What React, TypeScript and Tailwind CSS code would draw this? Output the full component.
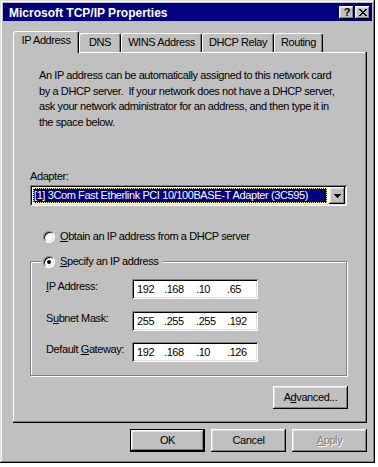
import type { ReactNode } from "react"

const raised = "bg-[#c0c0c0] shadow-[inset_-1px_-1px_#000,inset_1px_1px_#fff,inset_-2px_-2px_#808080,inset_2px_2px_#dfdfdf]"
const sunken = "bg-white shadow-[inset_1px_1px_#808080,inset_-1px_-1px_#fff,inset_2px_2px_#000,inset_-2px_-2px_#dfdfdf]"

const TABS = [
  { label: "IP Address", w: "w-[66px]", active: true },
  { label: "DNS", w: "w-[42px]" },
  { label: "WINS Address", w: "w-[81px]" },
  { label: "DHCP Relay", w: "w-[72px]" },
  { label: "Routing", w: "w-[49px]" },
]

function Radio({ checked }: { checked?: boolean }) {
  return (
    <span className="flex h-3 w-3 shrink-0 items-center justify-center rounded-full border border-t-[#808080] border-l-[#808080] border-b-white border-r-white bg-white shadow-[inset_1px_1px_#000,inset_-1px_-1px_#dfdfdf]">
      {checked && <span className="h-1 w-1 rounded-full bg-black" />}
    </span>
  )
}

function IpField({ parts }: { parts: string[] }) {
  return (
    <div className={`flex h-5 w-[126px] items-center pl-[5px] ${sunken}`}>
      <span className="w-[27px]">{parts[0]}</span>
      <span className="w-[32px]">.{parts[1]}</span>
      <span className="w-[31px]">.{parts[2]}</span>
      <span>.{parts[3]}</span>
    </div>
  )
}

function Row({ label, parts, className = "" }: { label: ReactNode; parts: string[]; className?: string }) {
  return (
    <div className={`flex h-5 items-start ${className}`}>
      <span className="w-[86px] pt-px">{label}</span>
      <IpField parts={parts} />
    </div>
  )
}

function Btn({ children, className = "" }: { children: ReactNode; className?: string }) {
  return <div className={`flex h-[23px] w-[75px] items-center justify-center ${raised} ${className}`}>{children}</div>
}

export default function App() {
  return (
    <div className="h-[467px] w-[378px] bg-white font-['Liberation_Sans',Arial,sans-serif] text-[11px] leading-[13px] tracking-[-0.4px] text-black">
      <div className="flex h-[463px] w-[375px] flex-col bg-[#c0c0c0] p-[3px] shadow-[inset_-1px_-1px_#000,inset_1px_1px_#dfdfdf,inset_-2px_-2px_#808080,inset_2px_2px_#fff]">
        {/* title bar */}
        <div className="flex h-[18px] shrink-0 items-center bg-[#000080] pl-[6px] pr-[2px]">
          <span className="flex-1 pt-px text-[12px] font-bold leading-[18px] tracking-normal text-white">Microsoft TCP/IP Properties</span>
          <div className={`flex h-[13px] w-[15px] items-center justify-center pl-px text-[11px] font-bold leading-none ${raised}`}>?</div>
          <div className={`ml-px flex h-[13px] w-[15px] items-center justify-center ${raised}`}>
            <svg width="8" height="7" viewBox="0 0 8 7" shapeRendering="crispEdges">
              <path d="M0 0h2v1H0zM6 0h2v1H6zM1 1h2v1H1zM5 1h2v1H5zM2 2h4v1H2zM3 3h2v1H3zM2 4h4v1H2zM1 5h2v1H1zM5 5h2v1H5zM0 6h2v1H0zM6 6h2v1H6z" fill="#000" />
            </svg>
          </div>
        </div>

        {/* tabs */}
        <div className="ml-[10px] mt-[10px] flex h-[21px] shrink-0 items-end">
          {TABS.map((t) => (
            <div
              key={t.label}
              className={`flex shrink-0 justify-center rounded-t-[3px] border-l border-t border-r border-white border-r-black bg-[#c0c0c0] pt-[2px] shadow-[inset_-1px_0_#808080] ${t.w} ${t.active ? "relative z-10 -mb-px h-[22px]" : "h-[19px]"}`}
            >
              {t.label}
            </div>
          ))}
        </div>

        {/* tab panel */}
        <div className="ml-[10px] flex h-[371px] w-[354px] shrink-0 flex-col shadow-[inset_-1px_-1px_#000,inset_-2px_-2px_#808080,inset_1px_1px_#fff]">
          <p className="ml-[26px] mt-[16px] h-[63px] whitespace-pre leading-[15.7px]">
            {"An IP address can be automatically assigned to this network card\nby a DHCP server.  If your network does not have a DHCP server,\nask your network administrator for an address, and then type it in\nthe space below."}
          </p>
          <div className="ml-[17px] mt-[39px]">Adapter:</div>
          <div className={`ml-[17px] mt-[2px] flex h-[21px] w-[317px] p-[2px] ${sunken}`}>
            <div className="my-px ml-px mr-[2px] flex flex-1 items-center border border-dotted border-[#ffff80] bg-[#000080] text-white whitespace-nowrap">
              [1] 3Com Fast Etherlink PCI 10/100BASE-T Adapter (3C595)
            </div>
            <div className={`flex w-4 items-center justify-center ${raised}`}>
              <svg width="7" height="4" viewBox="0 0 7 4" shapeRendering="crispEdges">
                <path d="M0 0h7v1H0zM1 1h5v1H1zM2 2h3v1H2zM3 3h1v1H3z" fill="#000" />
              </svg>
            </div>
          </div>

          <div className="ml-[30px] mt-[24px] flex h-[13px] items-center gap-[5px]">
            <Radio />
            <span><u>O</u>btain an IP address from a DHCP server</span>
          </div>

          <div className="ml-[17px] mt-[18px] flex w-[318px] flex-col">
            <div className="w-[317px] border border-[#808080] pb-[13px] shadow-[inset_1px_1px_#fff,1px_1px_#fff]">
              <div className="-mt-[7px] ml-[10px] flex h-[13px] w-fit items-center gap-[5px] bg-[#c0c0c0] pl-[2px] pr-[5px]">
                <Radio checked />
                <span><u>S</u>pecify an IP address</span>
              </div>
              <div className="mt-[11px] flex flex-col pl-[15px]">
                <Row label={<><u>I</u>P Address:</>} parts={["192", "168", "10", "65"]} />
                <Row className="mt-[12px]" label={<>S<u>u</u>bnet Mask:</>} parts={["255", "255", "255", "192"]} />
                <Row className="mt-[11px]" label={<>Default <u>G</u>ateway:</>} parts={["192", "168", "10", "126"]} />
              </div>
            </div>
            <Btn className="mt-[10px] self-end">A<u>d</u>vanced...</Btn>
          </div>
        </div>

        {/* dialog buttons */}
        <div className="ml-[10px] mt-[6px] flex w-[354px] justify-end gap-[6px]">
          <div className="h-[23px] w-[75px] border border-black">
            <div className={`flex h-full w-full items-center justify-center ${raised}`}>OK</div>
          </div>
          <Btn>Cancel</Btn>
          <Btn className="text-[#808080] [text-shadow:1px_1px_0_#fff]"><u>A</u>pply</Btn>
        </div>
      </div>
    </div>
  )
}
